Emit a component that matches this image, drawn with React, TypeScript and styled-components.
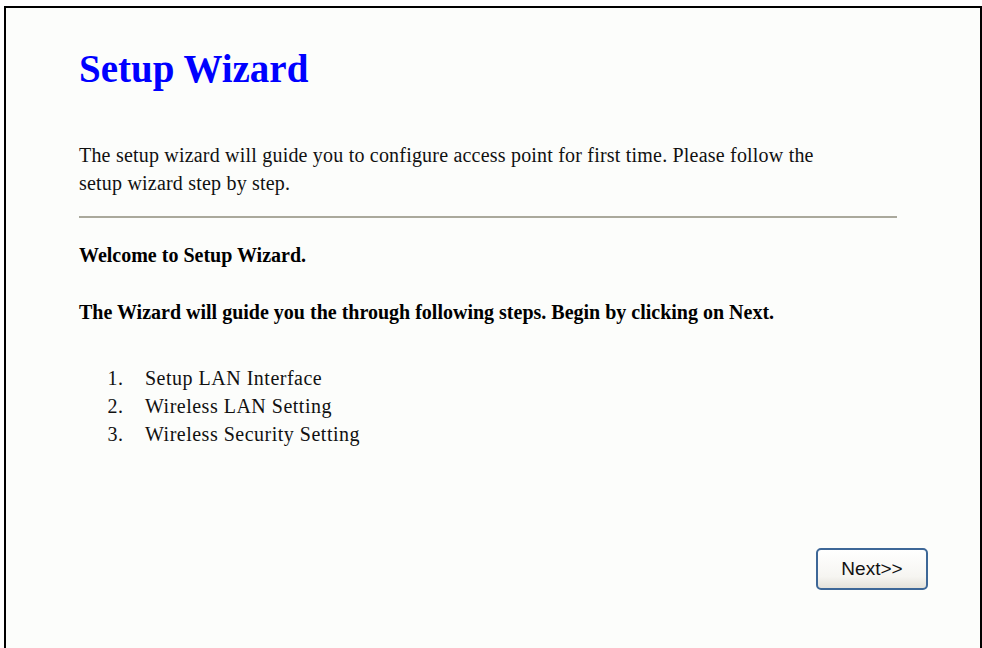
import React from 'react';
import styled, { createGlobalStyle } from 'styled-components';

const GlobalStyle = createGlobalStyle`
  html, body {
    margin: 0;
    padding: 0;
    background: #ffffff;
  }
  body {
    font-family: 'Liberation Serif', 'Times New Roman', serif;
  }
`;

const Frame = styled.div`
  box-sizing: border-box;
  margin: 6px 0 0 4px;
  width: 978px;
  height: 642px;
  border: 2px solid #000;
  border-bottom: none;
  background: #fcfdfb;
  padding: 37px 0 0 73px;
  display: flex;
  flex-direction: column;
`;

const Title = styled.h1`
  margin: 0;
  font-family: 'Liberation Serif', 'Times New Roman', serif;
  font-size: 39px;
  font-weight: 700;
  color: #0000ff;
  line-height: 48px;
`;

const Intro = styled.p`
  margin: 48px 0 0;
  width: 770px;
  font-size: 20px;
  letter-spacing: 0.2px;
  line-height: 28px;
  color: #111;
`;

const Rule = styled.hr`
  margin: 19px 0 0;
  width: 818px;
  border: none;
  border-top: 2px solid #aaa99c;
`;

const Heading = styled.p<{ $gap: number }>`
  margin: ${p => p.$gap}px 0 0;
  font-size: 20px;
  font-weight: 700;
  line-height: 28px;
  color: #000;
`;

const Steps = styled.ol`
  margin: 38px 0 0;
  padding: 0 0 0 50px;
  font-size: 20px;
  letter-spacing: 0.5px;
  line-height: 28px;
  color: #111;

  li {
    padding-left: 16px;
  }
`;

const Footer = styled.div`
  display: flex;
  justify-content: flex-end;
  width: 849px;
  margin-top: 100px;
`;

const NextButton = styled.button`
  width: 112px;
  height: 42px;
  border: 2px solid #3d6797;
  border-radius: 5px;
  background: linear-gradient(#ffffff 0%, #f6f5f1 70%, #e4e2da 100%);
  font-family: 'Liberation Sans', Arial, sans-serif;
  font-size: 19px;
  color: #111;
  cursor: pointer;
`;

export default function App() {
  return (
    <>
      <GlobalStyle />
      <Frame>
        <Title>Setup Wizard</Title>
        <Intro>
          The setup wizard will guide you to configure access point for first time. Please follow the
          setup wizard step by step.
        </Intro>
        <Rule />
        <Heading $gap={23}>Welcome to Setup Wizard.</Heading>
        <Heading $gap={29}>
          The Wizard will guide you the through following steps. Begin by clicking on Next.
        </Heading>
        <Steps>
          <li>Setup LAN Interface</li>
          <li>Wireless LAN Setting</li>
          <li>Wireless Security Setting</li>
        </Steps>
        <Footer>
          <NextButton>Next&gt;&gt;</NextButton>
        </Footer>
      </Frame>
    </>
  );
}
